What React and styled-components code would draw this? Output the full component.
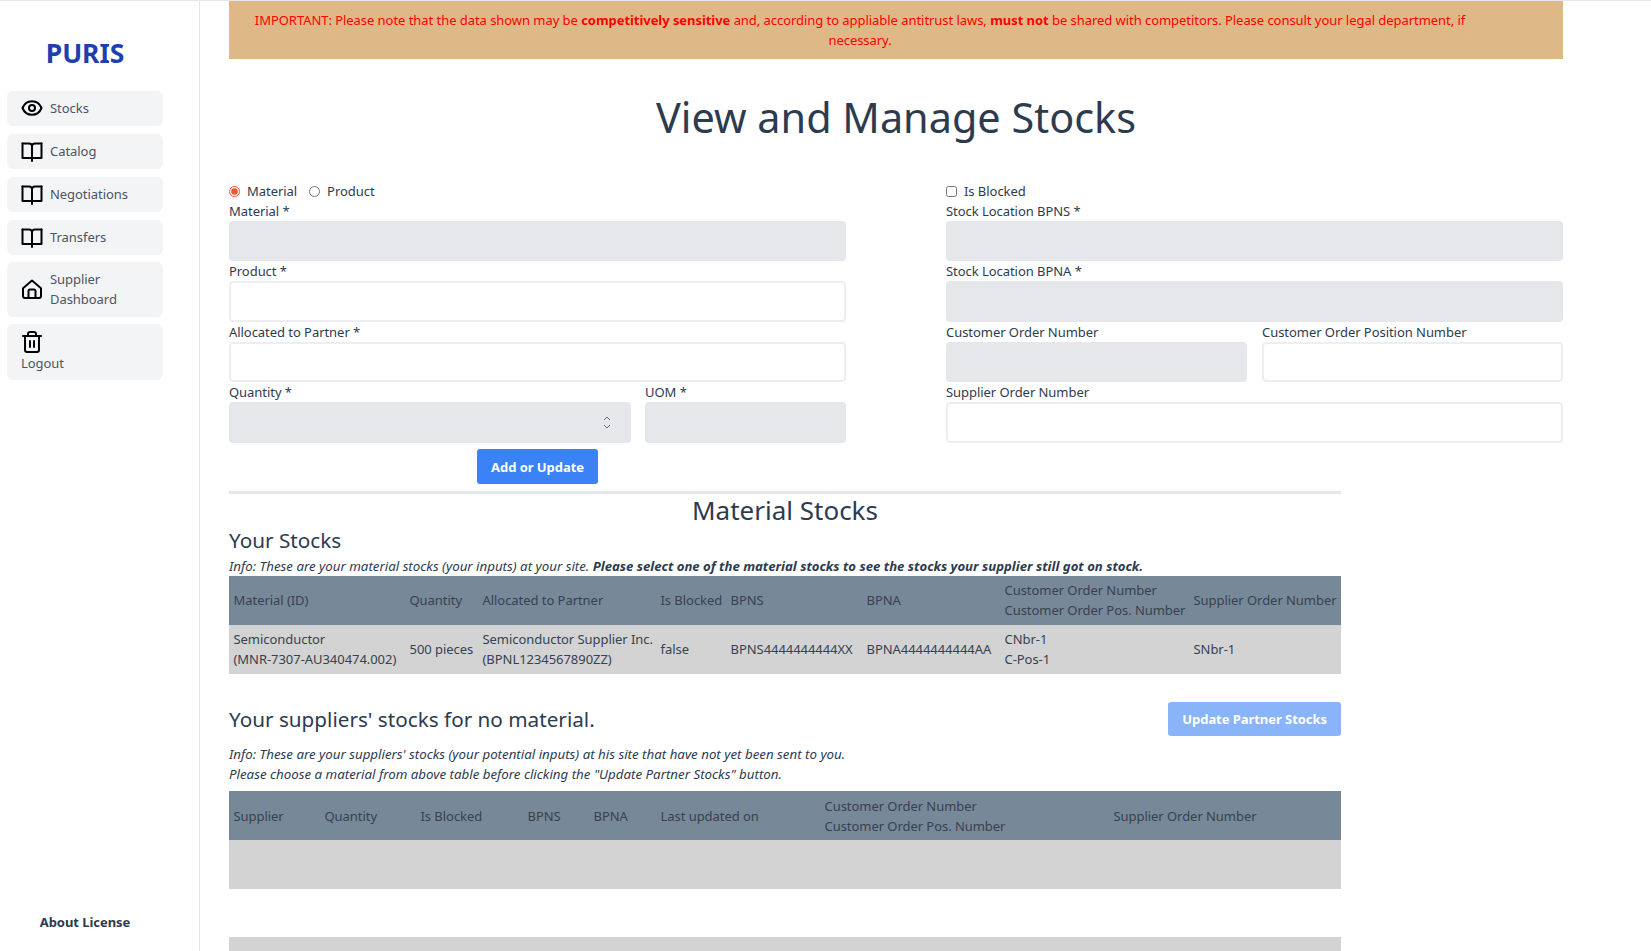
import React from 'react';
import styled, {createGlobalStyle} from 'styled-components';

const GlobalStyle = createGlobalStyle`
  html, body {
    margin: 0;
    padding: 0;
    height: 100%;
    overflow: hidden;
    background: #fff;
  }
  * { box-sizing: border-box; }
  body {
    font-family: "Noto Sans", "Open Sans", sans-serif;
    font-size: 13px;
    letter-spacing: -0.05px;
    line-height: 20px;
    color: #2d3b4f;
  }
`;

const Stroke = ({children, size = 24, ...rest}) => (
  <svg width={size} height={size} viewBox="0 0 24 24" fill="none" stroke="#000" strokeWidth="2" strokeLinecap="round" strokeLinejoin="round" {...rest}>
    {children}
  </svg>
);

const EyeIcon = () => (
  <Stroke>
    <path d="M2.500 12C4.200 7.800 7.700 5.200 12 5.200s7.800 2.600 9.500 6.800c-1.700 4.200-5.200 6.800-9.500 6.800S4.200 16.200 2.500 12z" />
    <circle cx="12" cy="12" r="3" />
  </Stroke>
);

const BookIcon = () => (
  <Stroke>
    <path d="M2.500 4.500H9c1.800 0 3 1 3 2.500v15" />
    <path d="M21.500 4.500H15c-1.800 0-3 1-3 2.500" />
    <path d="M2.500 4.500v14.500H12h9.500V4.500" />
  </Stroke>
);

const HomeIcon = () => (
  <Stroke>
    <path d="M3 11.200 12 3.500l9 7.700V19a2 2 0 0 1-2 2H5a2 2 0 0 1-2-2z" />
    <path d="M8.500 21v-7a1.500 1.500 0 0 1 1.500-1.500h4a1.500 1.500 0 0 1 1.500 1.500v7" />
  </Stroke>
);

const TrashIcon = () => (
  <Stroke>
    <path d="M3 6h18" />
    <path d="M8 6V4a2 2 0 0 1 2-2h4a2 2 0 0 1 2 2v2" />
    <path d="M5 6v14a2 2 0 0 0 2 2h10a2 2 0 0 0 2-2V6" />
    <path d="M10 11v6" />
    <path d="M14 11v6" />
  </Stroke>
);

const App = () => {
  return (
    <Page>
      <GlobalStyle />
      <Sidebar>
        <div>
          <Logo>PURIS</Logo>
          <Nav>
            <NavItem><EyeIcon /><span>Stocks</span></NavItem>
            <NavItem><BookIcon /><span>Catalog</span></NavItem>
            <NavItem><BookIcon /><span>Negotiations</span></NavItem>
            <NavItem><BookIcon /><span>Transfers</span></NavItem>
            <NavItem $tall><HomeIcon /><span>Supplier<br />Dashboard</span></NavItem>
            <LogoutItem><TrashIcon /><span>Logout</span></LogoutItem>
          </Nav>
        </div>
        <AboutLink>About License</AboutLink>
      </Sidebar>

      <Main>
        <Banner>
          IMPORTANT: Please note that the data shown may be <b>competitively sensitive</b> and, according to appliable antitrust laws, <b>must not</b> be shared with competitors. Please consult your legal department, if<br />necessary.
        </Banner>
        <Title>View and Manage Stocks</Title>

        <FormGrid>
          <FormColumn>
            <ChoiceRow>
              <Choice><input type="radio" name="kind" defaultChecked />Material</Choice>
              <Choice><input type="radio" name="kind" />Product</Choice>
            </ChoiceRow>
            <Field label="Material *" disabled />
            <Field label="Product *" />
            <Field label="Allocated to Partner *" />
            <FieldRow $gap={14}>
              <Field label="Quantity *" disabled grow={2} spinner />
              <Field label="UOM *" disabled grow={1} />
            </FieldRow>
            <SubmitRow>
              <PrimaryButton type="button">Add or Update</PrimaryButton>
            </SubmitRow>
          </FormColumn>
          <FormColumn>
            <ChoiceRow>
              <Choice><input type="checkbox" />Is Blocked</Choice>
            </ChoiceRow>
            <Field label="Stock Location BPNS *" disabled />
            <Field label="Stock Location BPNA *" disabled />
            <FieldRow $gap={15}>
              <Field label="Customer Order Number" disabled grow={1} />
              <Field label="Customer Order Position Number" grow={1} />
            </FieldRow>
            <Field label="Supplier Order Number" />
          </FormColumn>
        </FormGrid>

        <Stocks>
          <SectionTitle>Material Stocks</SectionTitle>
          <SubTitle>Your Stocks</SubTitle>
          <Info>
            Info: These are your material stocks (your inputs) at your site. <b>Please select one of the material stocks to see the stocks your supplier still got on stock.</b>
          </Info>
          <StockTable>
            <colgroup>
              {[176, 73, 178, 70, 136, 138, 189, 152].map((w, i) => <Col key={i} $w={w} />)}
            </colgroup>
            <thead>
              <tr>
                <th>Material (ID)</th>
                <th>Quantity</th>
                <th>Allocated to Partner</th>
                <th>Is Blocked</th>
                <th>BPNS</th>
                <th>BPNA</th>
                <th>Customer Order Number<br />Customer Order Pos. Number</th>
                <th>Supplier Order Number</th>
              </tr>
            </thead>
            <tbody>
              <tr>
                <td>Semiconductor<br />(MNR-7307-AU340474.002)</td>
                <td>500 pieces</td>
                <td>Semiconductor Supplier Inc.<br />(BPNL1234567890ZZ)</td>
                <td>false</td>
                <td>BPNS4444444444XX</td>
                <td>BPNA4444444444AA</td>
                <td>CNbr-1<br />C-Pos-1</td>
                <td>SNbr-1</td>
              </tr>
            </tbody>
          </StockTable>

          <PartnerHeader>
            <SubTitle>Your suppliers' stocks for no material.</SubTitle>
            <PrimaryButton type="button" disabled>Update Partner Stocks</PrimaryButton>
          </PartnerHeader>
          <PartnerInfo>
            Info: These are your suppliers' stocks (your potential inputs) at his site that have not yet been sent to you.<br />
            Please choose a material from above table before clicking the "Update Partner Stocks" button.
          </PartnerInfo>
          <StockTable>
            <colgroup>
              {[91, 96, 107, 66, 67, 164, 289, 232].map((w, i) => <Col key={i} $w={w} />)}
            </colgroup>
            <thead>
              <tr>
                <th>Supplier</th>
                <th>Quantity</th>
                <th>Is Blocked</th>
                <th>BPNS</th>
                <th>BPNA</th>
                <th>Last updated on</th>
                <th>Customer Order Number<br />Customer Order Pos. Number</th>
                <th>Supplier Order Number</th>
              </tr>
            </thead>
            <tbody>
              <tr>
                <td colSpan={8}><br /><br /></td>
              </tr>
            </tbody>
          </StockTable>
          <NextTableBar />
        </Stocks>
      </Main>
    </Page>
  );
}

export default App;

function Field({label, disabled, grow, spinner}) {
  return (
    <FieldWrap $grow={grow}>
      <FieldLabel>{label}</FieldLabel>
      <InputBox>
        <TextInput disabled={disabled} aria-label={label} />
        {spinner && (
          <Spinner width="8" height="13" viewBox="0 0 8 13" fill="none" stroke="#6b7280" strokeWidth="1">
            <path d="M1 4l3-3 3 3" />
            <path d="M1 9l3 3 3-3" />
          </Spinner>
        )}
      </InputBox>
    </FieldWrap>
  );
}

const Page = styled.div`
  display: flex;
  height: 100vh;
  overflow: hidden;
  border-top: 1px solid #e5e7eb;
`;

const Sidebar = styled.aside`
  flex: 0 0 200px;
  display: flex;
  flex-direction: column;
  justify-content: space-between;
  padding: 0 36px 19px 7px;
  border-right: 1px solid #e5e7eb;
`;

const Logo = styled.div`
  height: 90px;
  padding-top: 36px;
  text-align: center;
  font-size: 26.5px;
  line-height: 32px;
  font-weight: 700;
  color: #1e40af;
`;

const Nav = styled.nav`
  display: flex;
  flex-direction: column;
  gap: 8px;
`;

const NavItem = styled.div`
  display: flex;
  align-items: center;
  gap: 6px;
  height: ${props => (props.$tall ? '55px' : '35px')};
  margin-top: ${props => (props.$tall ? '-1px' : '0')};
  padding: 0 0 2px 13px;
  background: #f3f4f6;
  border-radius: 6px;
  color: #4b5563;
  svg { flex: none; }
`;

const LogoutItem = styled.div`
  display: flex;
  flex-direction: column;
  align-items: flex-start;
  height: 56px;
  margin-top: -1px;
  padding: 6px 14px 0;
  background: #f3f4f6;
  border-radius: 6px;
  color: #4b5563;
  svg { margin: 0 0 -1.5px -1px; }
`;

const AboutLink = styled.div`
  text-align: center;
  font-weight: 700;
  color: #2d3b4f;
`;

const Main = styled.main`
  width: 1334px;
  margin-left: 29px;
`;

const Banner = styled.div`
  height: 58px;
  padding: 9px 72px 0 0;
  text-align: center;
  background: #deb887;
  color: #f00;
  b { font-weight: 700; }
`;

const Title = styled.h1`
  height: 122px;
  margin: 0;
  padding-top: 31px;
  text-align: center;
  font-size: 41.4px;
  line-height: 54px;
  font-weight: 400;
  letter-spacing: 0;
  color: #2d3b4f;
`;

const FormGrid = styled.div`
  display: grid;
  grid-template-columns: 617px 617px;
  column-gap: 100px;
`;

const FormColumn = styled.div`
  display: flex;
  flex-direction: column;
`;

const ChoiceRow = styled.div`
  display: flex;
  gap: 12px;
  height: 19.5px;
  align-items: center;
`;

const Choice = styled.label`
  display: flex;
  align-items: center;
  gap: 7px;
  input {
    width: 11px;
    height: 11px;
    margin: 1px 0 0;
    accent-color: #f0562b;
  }
`;

const FieldWrap = styled.div`
  flex: ${props => props.$grow || 'none'};
  min-width: 0;
`;

const FieldLabel = styled.div`
  height: 20px;
`;

const InputBox = styled.div`
  position: relative;
`;

const TextInput = styled.input`
  display: block;
  width: 100%;
  height: 40.5px;
  border: 2px solid #eceef1;
  border-radius: 4px;
  background: #fff;
  &:disabled {
    background: #e5e7eb;
    border-color: #e5e7eb;
  }
`;

const Spinner = styled.svg`
  position: absolute;
  top: 14px;
  right: 20px;
`;

const FieldRow = styled.div`
  display: flex;
  gap: ${props => props.$gap}px;
`;

const SubmitRow = styled.div`
  display: flex;
  justify-content: center;
  padding-top: 6.5px;
`;

const PrimaryButton = styled.button`
  height: 35px;
  padding: 0 14px;
  border: none;
  border-radius: 3px;
  background: #3b82f6;
  color: #fff;
  font-family: inherit;
  font-size: 13px;
  letter-spacing: -0.05px;
  font-weight: 700;
  &:disabled { height: 34px; background: #89b4fa; }
`;

const Stocks = styled.section`
  width: 1112px;
  margin-top: 7px;
  border-top: 3px solid #e5e7eb;
`;

const SectionTitle = styled.h2`
  margin: 0;
  height: 32px;
  text-align: center;
  font-size: 26px;
  line-height: 33px;
  font-weight: 400;
  letter-spacing: 0;
`;

const SubTitle = styled.h3`
  margin: 0;
  font-size: 20.7px;
  line-height: 28px;
  font-weight: 400;
  letter-spacing: 0;
`;

const Info = styled.p`
  margin: 1.5px 0 0;
  font-size: 13.3px;
  letter-spacing: 0;
  font-style: italic;
  b { font-size: 13.15px; }
`;

const StockTable = styled.table`
  width: 1112px;
  table-layout: fixed;
  border-collapse: collapse;
  th, td {
    padding: 4.5px;
    text-align: left;
    font-weight: 400;
    white-space: nowrap;
  }
  th { background: #778899; color: #374151; }
  td { background: #d3d3d3; color: #374151; }
`;

const Col = styled.col`
  width: ${props => props.$w}px;
`;

const PartnerHeader = styled.div`
  display: flex;
  justify-content: space-between;
  align-items: center;
  margin-top: 28.5px;
`;

const PartnerInfo = styled.p`
  margin: 8px 0 7px;
  font-size: 13.3px;
  letter-spacing: 0;
  font-style: italic;
`;

const NextTableBar = styled.div`
  height: 49px;
  margin-top: 48px;
  background: #d3d3d3;
`;
